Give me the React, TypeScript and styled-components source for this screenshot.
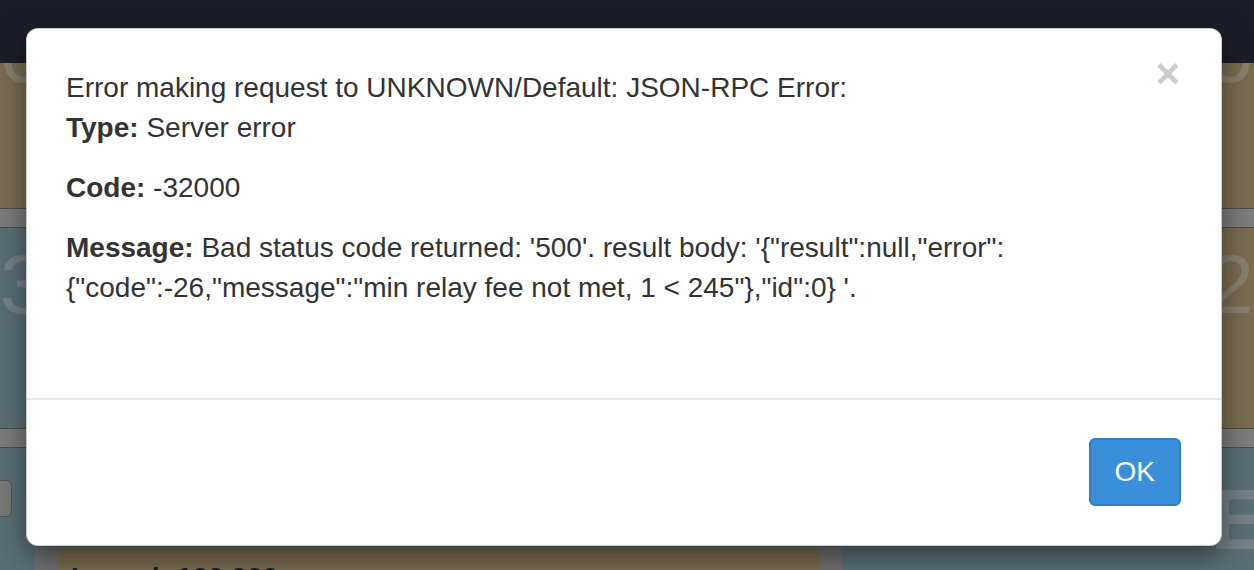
import React from 'react'
import styled, { createGlobalStyle } from 'styled-components'

const TAN = '#cbb685'
const BLUE = '#96bbc5'
const RULE = '#d0d0d0'
const TEXT = '#333'

const GlobalStyle = createGlobalStyle`
  html, body {
    margin: 0;
    padding: 0;
    background: ${BLUE};
    font-family: "Liberation Sans", Arial, sans-serif;
  }
`

const Page = styled.div`
  position: relative;
  height: 570px;
  overflow: hidden;
  display: flex;
  flex-direction: column;
`

const Navbar = styled.div`
  height: 63px;
  flex: none;
  background: #2b3243;
`

const Band = styled.div<{ $bg: string; $height: number; $end?: boolean }>`
  height: ${p => p.$height}px;
  flex: none;
  background: ${p => p.$bg};
  overflow: hidden;
  display: flex;
  justify-content: ${p => (p.$end ? 'flex-end' : 'space-between')};
`

const Divider = styled.div`
  height: 18px;
  flex: none;
  background: ${RULE};
  border-top: 1px solid #7a7a7a;
  border-bottom: 1px solid #7a7a7a;
`

const Split = styled.div`
  height: 200px;
  flex: none;
  display: grid;
  grid-template-columns: 1fr 1fr;
`

const Figure = styled.span<{ $top: number }>`
  margin-top: ${p => p.$top}px;
  font-size: 84px;
  line-height: 1;
  color: rgba(255, 255, 255, 0.45);
  white-space: nowrap;
`

const BottomRow = styled.div`
  flex: 1;
  display: flex;
  background: ${BLUE};
`

const BottomLeft = styled.div`
  width: 842px;
  display: flex;
  flex-direction: column;
  padding-top: 32px;
`

const StubButton = styled.div`
  width: 40px;
  height: 35px;
  margin-left: -30px;
  border-radius: 6px;
  background: #c8c8c8;
  border: 1px solid #8a8a8a;
`

const CardFrame = styled.div`
  margin: 31px 0 0 35px;
  padding: 0 22px;
  flex: 1;
  background: #bdbdbd;
`

const Card = styled.div`
  height: 100%;
  background: ${TAN};
  padding: 14px 14px 0;
  font-size: 28px;
  font-weight: 700;
  color: ${TEXT};
`

const BottomRight = styled.div`
  flex: 1;
  display: flex;
  justify-content: flex-end;
  padding-top: 28px;
  overflow: hidden;
`

const Letter = styled.span`
  font-size: 86px;
  font-weight: 700;
  line-height: 1;
  color: rgba(255, 255, 255, 0.45);
  margin-right: -14px;
`

const Backdrop = styled.div`
  position: absolute;
  inset: 0;
  background: rgba(0, 0, 0, 0.4);
`

const Dialog = styled.div`
  position: absolute;
  top: 28px;
  left: 26px;
  width: 1196px;
  box-sizing: border-box;
  background: #fff;
  border: 1px solid rgba(0, 0, 0, 0.2);
  border-radius: 12px;
  box-shadow: 0 10px 30px rgba(0, 0, 0, 0.5);
  color: ${TEXT};
  font-size: 28px;
  line-height: 40px;
`

const Close = styled.button`
  position: absolute;
  top: 24px;
  right: 41px;
  padding: 0;
  border: 0;
  background: none;
  font-family: "Liberation Sans", Arial, sans-serif;
  font-size: 42px;
  font-weight: 700;
  line-height: 1;
  color: #000;
  opacity: 0.2;
  cursor: pointer;
`

const Body = styled.div`
  padding: 39px 40px 70px 39px;

  p {
    margin: 0 0 20px;
  }

  b {
    font-weight: 700;
  }
`

const Footer = styled.div`
  border-top: 2px solid #e5e5e5;
  padding: 38px 40px 39px;
  display: flex;
  justify-content: flex-end;
`

const OkButton = styled.button`
  font-family: "Liberation Sans", Arial, sans-serif;
  font-size: 28px;
  line-height: 40px;
  padding: 12px 24px;
  border: 2px solid #327fc4;
  border-radius: 6px;
  background: #3b8ed9;
  color: #fff;
  cursor: pointer;
`

const App = () => (
  <>
    <GlobalStyle />
    <Page>
      <Navbar />
      <Band $bg={TAN} $height={145}>
        <Figure $top={-52}>00</Figure>
        <Figure $top={-52}>.0</Figure>
      </Band>
      <Divider />
      <Split>
        <Band $bg={BLUE} $height={200}>
          <Figure $top={14}>32</Figure>
        </Band>
        <Band $bg={TAN} $height={200} $end>
          <Figure $top={14}>.2</Figure>
        </Band>
      </Split>
      <Divider />
      <BottomRow>
        <BottomLeft>
          <StubButton />
          <CardFrame>
            <Card>Issued: 100,000</Card>
          </CardFrame>
        </BottomLeft>
        <BottomRight>
          <Letter>E</Letter>
        </BottomRight>
      </BottomRow>
      <Backdrop />
      <Dialog>
        <Close aria-label="Close">×</Close>
        <Body>
          <p>
            Error making request to UNKNOWN/Default: JSON-RPC Error:
            <br />
            <b>Type:</b> Server error
          </p>
          <p>
            <b>Code:</b> -32000
          </p>
          <p>
            <b>Message:</b> Bad status code returned: '500'. result body:
            {' \'{"result":null,"error":{"code":-26,"message":"min relay fee not met, 1 < 245"},"id":0} \'.'}
          </p>
        </Body>
        <Footer>
          <OkButton>OK</OkButton>
        </Footer>
      </Dialog>
    </Page>
  </>
)

export default App
